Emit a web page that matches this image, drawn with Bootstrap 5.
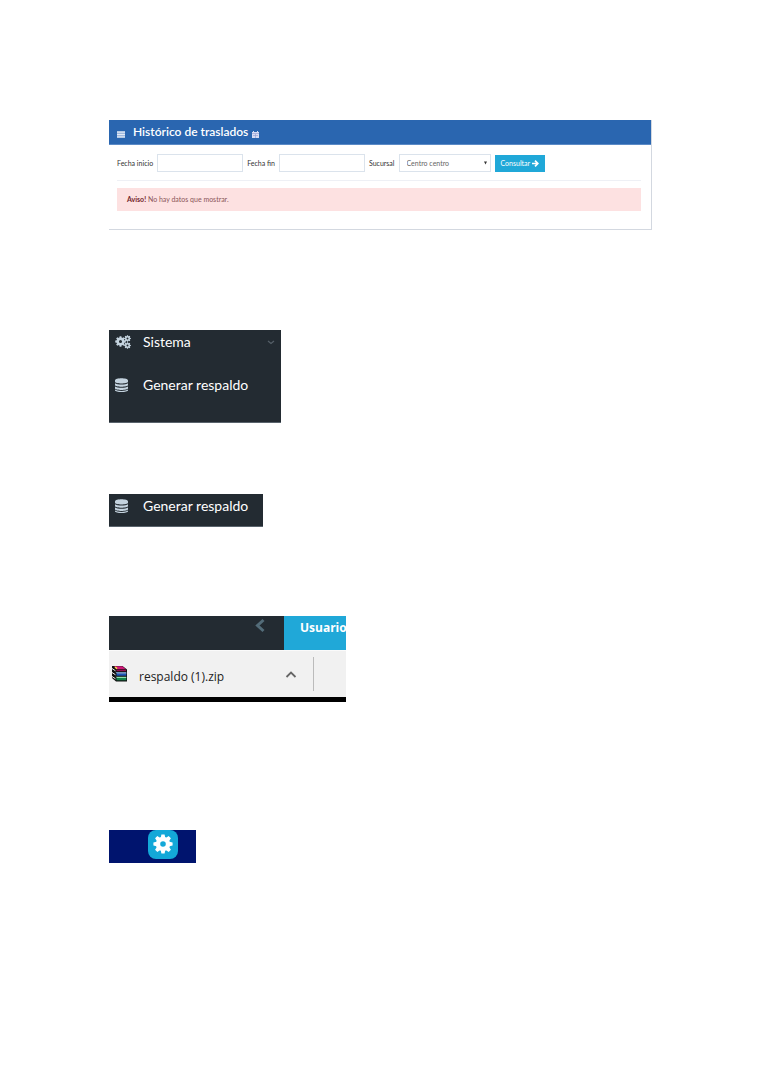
<!DOCTYPE html>
<html lang="es">
<head>
<meta charset="utf-8">
<meta name="viewport" content="width=device-width, initial-scale=1">
<title>Histórico de traslados</title>
<link href="https://cdn.jsdelivr.net/npm/bootstrap@5.3.0/dist/css/bootstrap.min.css" rel="stylesheet">
<style>
body { font-family: Lato, "Open Sans", sans-serif; font-size: 14px; line-height: 20px; background: #fff; color: #333; }
svg { display: block; flex: none; }
.sheet { padding: 120px 108px 200px 109px; }
.history { border-right: 1px solid #d3d8e0; border-bottom: 1px solid #d3d8e0; margin-bottom: 100px; font-size: 7px; line-height: 10px; }
.history-head { background: #2a66b0; color: #fff; height: 25px; padding: 0 8px; border-bottom: 1px solid #5b8ac6; }
.history-head h1 { font-size: 12px; line-height: 24px; font-weight: 600; }
.history-body { padding: 9px 10px 18px 8px; }
.filters { padding-bottom: 8px; border-bottom: 1px solid #eef0f5; }
.filters .form-control, .filters .form-select { height: 18px; min-height: 0; width: 86px; padding: 0 7px; border: 1px solid #dbe3ec; border-radius: 0; font-size: 7px; line-height: 16px; color: #666; }
.filters .form-select { width: 92px; background-size: 3px 4px; background-position: right 3px center; background-image: url("data:image/svg+xml,%3Csvg xmlns='http://www.w3.org/2000/svg' viewBox='0 0 4 4'%3E%3Cpath d='M0 0h4L2 4z' fill='%23333'/%3E%3C/svg%3E"); }
.btn-query { height: 17px; padding: 0 6px; border: 0; border-radius: 0; background: #20a8d8; color: #fff; font-size: 7px; line-height: 17px; gap: 2px; }
.btn-query:hover { background: #1985ac; color: #fff; }
.notice { margin: 7px 0 0; padding: 6px 10px; border: 0; border-radius: 0; background: #fde1e1; color: #8a5558; line-height: 11px; }
.notice strong { color: #74262b; }
.side { background: #232b32; border-bottom: 1px solid #59636c; }
.side a { color: #fff; text-decoration: none; padding: 2px 6px 0; height: 22px; }
.side a svg:first-child { color: #c4d3df; }
.side-menu { width: 172px; height: 93px; margin-bottom: 71px; }
.side-menu li + li { margin-top: 21px; }
.side-item { width: 154px; height: 33px; margin-bottom: 89px; }
.side-label { margin-left: 12px; }
.download { width: 237px; margin-bottom: 128px; border-bottom: 5px solid #000; font-family: "Open Sans", "Noto Sans", sans-serif; }
.download-top { height: 34px; background: #232b32; }
.btn-collapse { padding: 2px 18px 0 0; border: 0; background: none; color: #536c79; }
.user-tab { width: 62px; height: 34px; padding: 2px 0 0 16px; background: #20a8d8; color: #fff; font-weight: 700; font-size: 12px; white-space: nowrap; text-decoration: none; }
.download-bar { height: 47px; padding: 0 32px 0 2px; background: #f1f1f1; border-top: 1px solid #fafafa; }
.download-bar a { color: #222; text-decoration: none; font-size: 12px; gap: 11px; }
.download-bar a span { padding-top: 6px; }
.btn-more { padding: 0; margin-right: 16px; border: 0; background: none; color: #666; }
.divider { width: 1px; height: 34px; background: #bbb; }
.settings { width: 87px; height: 33px; background: #00146e; padding-left: 39px; }
.btn-settings { width: 30px; height: 29px; padding: 0 0 1px; border: 0; border-radius: 8px; background: #13a8d8; color: #fff; }
</style>
</head>
<body>
<svg width="0" height="0" class="position-absolute" aria-hidden="true">
  <symbol id="gear" viewBox="-10 -10 20 20">
    <circle r="5" fill="none" stroke="currentColor" stroke-width="4.4"/>
    <g fill="currentColor">
      <path id="teeth" d="M-2.2-6.5L-1.6-9.6H1.6L2.2-6.5V-5H-2.2zM-2.2 6.5L-1.6 9.6H1.6L2.2 6.5V5H-2.2zM-6.5-2.2L-9.6-1.6V1.6L-6.5 2.2H-5V-2.2zM6.5-2.2L9.6-1.6V1.6L6.5 2.2H5V-2.2z"/>
      <use href="#teeth" transform="rotate(45)"/>
    </g>
  </symbol>
  <symbol id="database" viewBox="0 0 13 14">
    <path fill="currentColor" d="M0 2.400C0-.5 13-.5 13 2.400v1.400C13 6.100 0 6.100 0 3.800zM0 5.200c2 1.700 11 1.700 13 0v1.900c0 2.300-13 2.300-13 0zM0 8.400c2 1.700 11 1.700 13 0v1.900c0 2.300-13 2.300-13 0zM0 11.600c2 1.700 11 1.700 13 0v.6c0 2.400-13 2.400-13 0z"/>
  </symbol>
</svg>

<main class="sheet">
  <section class="history">
    <header class="history-head d-flex align-items-center">
      <svg width="8" height="7" viewBox="0 0 8 7" class="mt-1"><path d="M0 1h8v5H0z" fill="#8aa9d6"/><path d="M0 1h8M0 3.500h8M0 6h8" stroke="#e3ebf6" stroke-width="1.300"/></svg>
      <h1 class="m-0 ms-2">Histórico de traslados</h1>
      <svg width="7" height="7" viewBox="0 0 7 7" class="mt-1 ms-1"><path d="M0 1h1V0h1v1h3V0h1v1h1v6H0z" fill="#d8dcf3"/><path d="M0 2.500h7M1 4.500h5M3.500 3v4" stroke="#8d99cf" stroke-width=".6"/></svg>
    </header>
    <div class="history-body">
      <form class="filters d-flex align-items-center gap-1">
        <label for="start">Fecha inicio</label>
        <input id="start" type="text" class="form-control">
        <label for="end">Fecha fin</label>
        <input id="end" type="text" class="form-control">
        <label for="branch">Sucursal</label>
        <select id="branch" class="form-select"><option>Centro centro</option></select>
        <button type="button" class="btn btn-query d-flex align-items-center">Consultar
          <svg width="7" height="7" viewBox="0 0 7 7" aria-hidden="true"><path d="M0 3.500h5.500M3 .7l2.800 2.800L3 6.300" fill="none" stroke="currentColor" stroke-width="1.700"/></svg>
        </button>
      </form>
      <div class="alert notice" role="alert"><strong>Aviso!</strong> No hay datos que mostrar.</div>
    </div>
  </section>

  <nav class="side side-menu" aria-label="Sistema">
    <ul class="list-unstyled m-0">
      <li><a href="#" class="d-flex align-items-center">
        <svg width="16" height="14" viewBox="0 0 16 14"><use href="#gear" x="0" y="1" width="11" height="11"/><use href="#gear" x="9" y="0" width="7" height="7"/><use href="#gear" x="9" y="7" width="7" height="7"/></svg>
        <span class="side-label">Sistema</span>
        <svg width="8" height="5" viewBox="0 0 8 5" class="ms-auto"><path d="M1 1l3 2.500L7 1" fill="none" stroke="#566069" stroke-width="1.200"/></svg>
      </a></li>
      <li><a href="#" class="d-flex align-items-center">
        <svg width="16" height="14"><use href="#database" width="13" height="14"/></svg>
        <span class="side-label">Generar respaldo</span>
      </a></li>
    </ul>
  </nav>

  <nav class="side side-item" aria-label="Respaldo">
    <a href="#" class="d-flex align-items-center">
      <svg width="16" height="14"><use href="#database" width="13" height="14"/></svg>
      <span class="side-label">Generar respaldo</span>
    </a>
  </nav>

  <section class="download">
    <div class="download-top d-flex justify-content-end align-items-start">
      <button type="button" class="btn-collapse" aria-label="Contraer"><svg width="12" height="15" viewBox="0 0 12 15"><path d="M9.500 2L3.500 7.500l6 5.500" fill="none" stroke="currentColor" stroke-width="3"/></svg></button>
      <a href="#" class="user-tab overflow-hidden">Usuario</a>
    </div>
    <div class="download-bar d-flex align-items-center">
      <a href="#" class="d-flex align-items-start me-auto">
        <svg width="17" height="17" viewBox="0 0 17 17" class="mt-1">
          <path d="M1 1h10.500L16 4.500v12H5L1 13z" fill="#111"/>
          <path d="M3 1.300h8.300L14.500 4H6z" fill="#d01878"/><path d="M5.500 4.500H15v1.700H5.500z" fill="#8f1050"/>
          <path d="M4.500 7.200h10.800v1.500H6z" fill="#8fc0f5"/><path d="M5.500 8.700h9.800v2H5.500z" fill="#1d55b8"/>
          <path d="M4.500 11.700h10.800v1.300H6z" fill="#8fe0b0"/><path d="M5.500 13h9.800v2.300H5.500z" fill="#12844a"/>
          <path d="M1 3.500l3.500 2.300M1 7.500l3.500 2.300M1 11.500l3.500 2.300" stroke="#eee" stroke-width="1"/><path d="M4 2l2 1.700" stroke="#ffd94a" stroke-width="1.600"/>
        </svg>
        <span>respaldo (1).zip</span>
      </a>
      <button type="button" class="btn-more" aria-label="Opciones"><svg width="12" height="9" viewBox="0 0 12 9"><path d="M1.500 7L6 2.500 10.500 7" fill="none" stroke="currentColor" stroke-width="1.800"/></svg></button>
      <div class="divider"></div>
    </div>
  </section>

  <section class="settings">
    <button type="button" class="btn-settings d-flex align-items-center justify-content-center" aria-label="Configuración"><svg width="20" height="20"><use href="#gear" width="20" height="20"/></svg></button>
  </section>
</main>
<script src="https://cdn.jsdelivr.net/npm/bootstrap@5.3.0/dist/js/bootstrap.bundle.min.js"></script>
</body>
</html>
